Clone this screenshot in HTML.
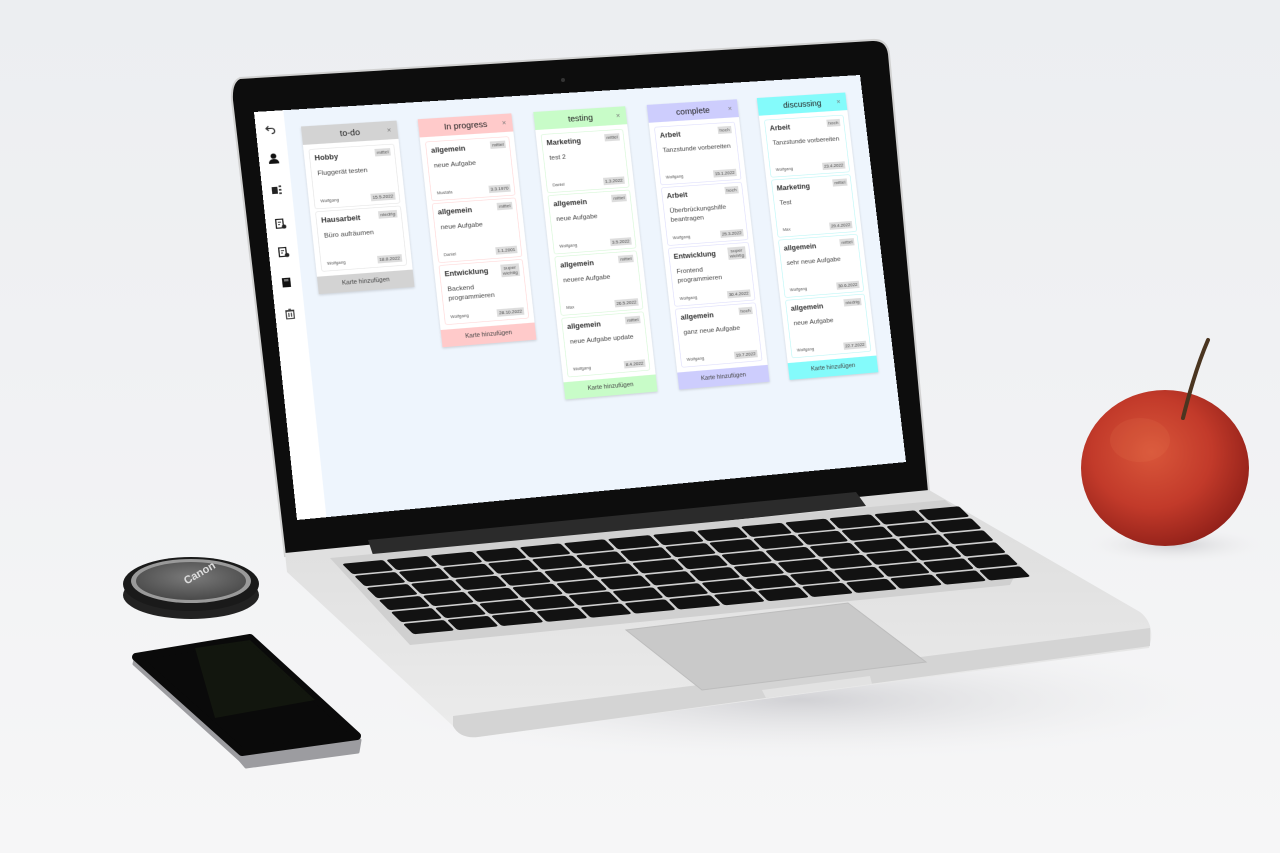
<!DOCTYPE html>
<html><head><meta charset="utf-8">
<style>
*{margin:0;padding:0;box-sizing:border-box}
body{width:1280px;height:853px;overflow:hidden;position:relative;background:linear-gradient(#eceef1 0%,#f0f1f3 40%,#f6f6f7 100%);font-family:"Liberation Sans",sans-serif}
svg.bg{position:absolute;left:0;top:0}
#scr{position:absolute;left:0;top:0;width:1000px;height:700px;transform-origin:0 0;
transform:matrix3d(0.65152,-0.03303,0,0.000052926, 0.057643,0.576229,0,-0.000012749, 0,0,1,0, 254,112,0,1);
background:#eef5fd;overflow:hidden}
.side{position:absolute;left:0;top:0;width:46px;height:700px;background:#fff}
.ic{position:absolute;left:13px;width:20px;height:20px}
.col{position:absolute;top:30px;width:152px;box-shadow:0 2px 4px rgba(0,0,0,.15);background:#fff}
.hd{height:32px;text-align:center;font-size:14px;line-height:32px;color:#222;position:relative}
.hd b{position:absolute;right:10px;top:0;font-weight:normal;color:#777;font-size:12px}
.cards{padding:4px 0}
.card{margin:4px 8px;height:104px;border:1px solid;border-radius:4px;position:relative;background:#fff}
.t{position:absolute;left:7px;top:8px;font-size:12px;font-weight:bold;color:#333}
.p{position:absolute;right:6px;top:6px;font-size:8px;background:#ddd;color:#555;padding:2px 3px;text-align:center;line-height:9px}
.x{position:absolute;left:9px;top:34px;font-size:11px;color:#444;right:8px;line-height:16px}
.w{position:absolute;left:9px;bottom:8px;font-size:7px;color:#555}
.d{position:absolute;right:6px;bottom:6px;font-size:7.5px;background:#ddd;color:#444;padding:2px 3px}
.ft{height:30px;text-align:center;font-size:10px;line-height:30px;color:#444}
</style></head><body>
<svg class="bg" width="1280" height="853" viewBox="0 0 1280 853">
<defs>
<linearGradient id="base" x1="0" y1="0" x2="0" y2="1"><stop offset="0" stop-color="#dcdcdc"/><stop offset="1" stop-color="#ececec"/></linearGradient>
<radialGradient id="ap" cx="0.42" cy="0.4" r="0.65"><stop offset="0" stop-color="#d9563a"/><stop offset="0.55" stop-color="#c23a2a"/><stop offset="1" stop-color="#8f1f18"/></radialGradient>
<radialGradient id="cap" cx="0.5" cy="0.4" r="0.6"><stop offset="0" stop-color="#7a7a7a"/><stop offset="1" stop-color="#4a4a4a"/></radialGradient>
<radialGradient id="sh" cx="0.5" cy="0.5" r="0.5"><stop offset="0" stop-color="#c8c8cc" stop-opacity=".8"/><stop offset="1" stop-color="#eeeeee" stop-opacity="0"/></radialGradient>
</defs>
<ellipse cx="800" cy="700" rx="420" ry="60" fill="url(#sh)"/>
<ellipse cx="1175" cy="545" rx="90" ry="18" fill="url(#sh)"/>
<path d="M240,78 L872,40 Q887,39 889,54 L929,492 L285,556 L232,100 Q231,82 240,78 Z" fill="#0d0d0d" stroke="#d2d2d2" stroke-width="2"/>
<circle cx="563" cy="80" r="2" fill="#333"/>
<path d="M285,553 L929,490 L1140,612 Q1153,622 1151,640 L1149,648 L478,737 Q460,739 453,726 L287,572 Z" fill="url(#base)"/>
<path d="M453,716 L1150,628 L1150,646 L478,737 Q460,739 453,726 Z" fill="#d4d4d4"/>
<path d="M368,540 L856,492 L866,506 L374,558 Z" fill="#2b2b2b"/>
<path d="M330,558 L945,500 L1020,565 L1010,585 L410,645 Z" fill="#d0d0d0"/>
<path d="M626,630 L848,603 L926,662 L702,690 Z" fill="#c9c9c9" stroke="#bdbdbd"/>
<path d="M762,690 L870,676 L872,684 L766,698 Z" fill="#e2e2e2"/>
<ellipse cx="191" cy="595" rx="68" ry="24" fill="#222"/>
<ellipse cx="191" cy="584" rx="68" ry="27" fill="#1a1a1a"/>
<ellipse cx="191" cy="581" rx="60" ry="22" fill="#9a9a9a"/>
<ellipse cx="191" cy="581" rx="55" ry="19" fill="url(#cap)"/>
<text x="185" y="585" font-family="Liberation Sans" font-weight="bold" font-size="11" fill="#ddd" transform="rotate(-30 185 582)">Canon</text>
<!-- phone -->
<path d="M134,664 L240,760 L246,767 L358,752 L360,740 L242,752 L136,656 Z" fill="#9c9ca0" stroke="#9c9ca0" stroke-width="3" stroke-linejoin="round"/>
<path d="M136,657 L250,638 L357,736 L242,752 Z" fill="#0a0a0a" stroke="#0a0a0a" stroke-width="8" stroke-linejoin="round"/>
<path d="M195,648 L250,640 L315,700 L215,718 Z" fill="#1a2212" opacity=".5"/>
<ellipse cx="191" cy="595" rx="0" ry="0"/>
<ellipse cx="1165" cy="468" rx="84" ry="78" fill="url(#ap)"/>
<ellipse cx="1140" cy="440" rx="30" ry="22" fill="#f08a5a" opacity=".12"/>
<path d="M1183,418 Q1195,370 1208,340" stroke="#4a3520" stroke-width="4" fill="none" stroke-linecap="round"/>
</svg>
<div style="position:absolute;left:0;top:0;width:620px;height:150px;transform-origin:0 0;transform:matrix(1.0016,-0.0935,0.4867,0.48,339,563)">
<div style="display:grid;grid-template-columns:repeat(14,1fr);grid-auto-rows:22px;gap:3px;padding:2px">
<script>document.write('<i style="background:#121212;border-radius:3px;display:block"></i>'.repeat(84))</script>
</div></div>
<div id="scr">
<div class="side">
<svg class="ic" style="top:22px" viewBox="0 0 20 20"><path d="M7 4 L3 8 L7 12 M3 8 H11 Q16 8 16 13 Q16 17 11 17" fill="none" stroke="#333" stroke-width="2"/></svg>
<svg class="ic" style="top:72px" viewBox="0 0 20 20"><circle cx="10" cy="6" r="4.5" fill="#111"/><path d="M2 19 Q2 11 10 11 Q18 11 18 19 Z" fill="#111"/></svg>
<svg class="ic" style="top:126px" viewBox="0 0 20 20"><rect x="2" y="5" width="9" height="12" fill="#222"/><rect x="13" y="3" width="4" height="3" fill="#444"/><rect x="13" y="9" width="4" height="3" fill="#444"/><rect x="13" y="15" width="4" height="3" fill="#444"/></svg>
<svg class="ic" style="top:185px" viewBox="0 0 20 20"><rect x="3" y="2" width="11" height="15" fill="none" stroke="#222" stroke-width="2"/><path d="M6 7 H11 M6 11 H9" stroke="#222" stroke-width="1.5"/><circle cx="15" cy="15" r="3.5" fill="#222"/></svg>
<svg class="ic" style="top:234px" viewBox="0 0 20 20"><rect x="3" y="2" width="11" height="15" fill="none" stroke="#222" stroke-width="2"/><path d="M6 7 H11 M6 11 H9" stroke="#222" stroke-width="1.5"/><circle cx="15" cy="15" r="3.5" fill="#222"/></svg>
<svg class="ic" style="top:286px" viewBox="0 0 20 20"><rect x="3" y="2" width="13" height="16" fill="#111"/><rect x="6" y="4" width="7" height="4" fill="#777"/></svg>
<svg class="ic" style="top:340px" viewBox="0 0 20 20"><rect x="4" y="5" width="12" height="13" fill="none" stroke="#222" stroke-width="1.6"/><path d="M3 4 H17 M8 2 H12 M8 8 V15 M12 8 V15" stroke="#222" stroke-width="1.5"/></svg>
</div>

<div class="col" style="left:71px;background:#fff">
<div class="hd" style="background:#d3d3d3">to-do<b>×</b></div>
<div class="cards">
<div class="card" style="border-color:#e4e4e4"><span class="t">Hobby</span><span class="p">mittel</span><span class="x">Fluggerät testen</span><span class="w">Wolfgang</span><span class="d">15.5.2022</span></div>
<div class="card" style="border-color:#e4e4e4"><span class="t">Hausarbeit</span><span class="p">niedrig</span><span class="x">Büro aufräumen</span><span class="w">Wolfgang</span><span class="d">18.8.2022</span></div>
</div>
<div class="ft" style="background:#d3d3d3">Karte hinzufügen</div></div>

<div class="col" style="left:257px">
<div class="hd" style="background:#ffcaca">In progress<b>×</b></div>
<div class="cards">
<div class="card" style="border-color:#ffd6d6"><span class="t">allgemein</span><span class="p">mittel</span><span class="x">neue Aufgabe</span><span class="w">Mustafa</span><span class="d">3.3.1970</span></div>
<div class="card" style="border-color:#ffd6d6"><span class="t">allgemein</span><span class="p">mittel</span><span class="x">neue Aufgabe</span><span class="w">Daniel</span><span class="d">1.1.2001</span></div>
<div class="card" style="border-color:#ffd6d6"><span class="t">Entwicklung</span><span class="p">super<br>wichtig</span><span class="x">Backend programmieren</span><span class="w">Wolfgang</span><span class="d">28.10.2022</span></div>
</div>
<div class="ft" style="background:#ffcaca">Karte hinzufügen</div></div>

<div class="col" style="left:445px">
<div class="hd" style="background:#c8fcc8">testing<b>×</b></div>
<div class="cards">
<div class="card" style="border-color:#d4f7d4"><span class="t">Marketing</span><span class="p">mittel</span><span class="x">test 2</span><span class="w">Daniel</span><span class="d">1.3.2022</span></div>
<div class="card" style="border-color:#d4f7d4"><span class="t">allgemein</span><span class="p">mittel</span><span class="x">neue Aufgabe</span><span class="w">Wolfgang</span><span class="d">3.5.2022</span></div>
<div class="card" style="border-color:#d4f7d4"><span class="t">allgemein</span><span class="p">mittel</span><span class="x">neuere Aufgabe</span><span class="w">Max</span><span class="d">26.5.2022</span></div>
<div class="card" style="border-color:#d4f7d4"><span class="t">allgemein</span><span class="p">mittel</span><span class="x">neue Aufgabe update</span><span class="w">Wolfgang</span><span class="d">8.4.2022</span></div>
</div>
<div class="ft" style="background:#c8fcc8">Karte hinzufügen</div></div>

<div class="col" style="left:633px">
<div class="hd" style="background:#cdcdfd">complete<b>×</b></div>
<div class="cards">
<div class="card" style="border-color:#dcdcfb"><span class="t">Arbeit</span><span class="p">hoch</span><span class="x">Tanzstunde vorbereiten</span><span class="w">Wolfgang</span><span class="d">15.1.2022</span></div>
<div class="card" style="border-color:#dcdcfb"><span class="t">Arbeit</span><span class="p">hoch</span><span class="x">Überbrückungshilfe beantragen</span><span class="w">Wolfgang</span><span class="d">25.3.2022</span></div>
<div class="card" style="border-color:#dcdcfb"><span class="t">Entwicklung</span><span class="p">super<br>wichtig</span><span class="x">Frontend programmieren</span><span class="w">Wolfgang</span><span class="d">30.4.2022</span></div>
<div class="card" style="border-color:#dcdcfb"><span class="t">allgemein</span><span class="p">hoch</span><span class="x">ganz neue Aufgabe</span><span class="w">Wolfgang</span><span class="d">19.7.2022</span></div>
</div>
<div class="ft" style="background:#cdcdfd">Karte hinzufügen</div></div>

<div class="col" style="left:819px">
<div class="hd" style="background:#84fbfb">discussing<b>×</b></div>
<div class="cards">
<div class="card" style="border-color:#b8f6f6"><span class="t">Arbeit</span><span class="p">hoch</span><span class="x">Tanzstunde vorbereiten</span><span class="w">Wolfgang</span><span class="d">23.4.2022</span></div>
<div class="card" style="border-color:#b8f6f6"><span class="t">Marketing</span><span class="p">mittel</span><span class="x">Test</span><span class="w">Max</span><span class="d">29.4.2022</span></div>
<div class="card" style="border-color:#b8f6f6"><span class="t">allgemein</span><span class="p">mittel</span><span class="x">sehr neue Aufgabe</span><span class="w">Wolfgang</span><span class="d">30.6.2022</span></div>
<div class="card" style="border-color:#b8f6f6"><span class="t">allgemein</span><span class="p">niedrig</span><span class="x">neue Aufgabe</span><span class="w">Wolfgang</span><span class="d">22.7.2022</span></div>
</div>
<div class="ft" style="background:#84fbfb">Karte hinzufügen</div></div>
</div>
</body></html>
